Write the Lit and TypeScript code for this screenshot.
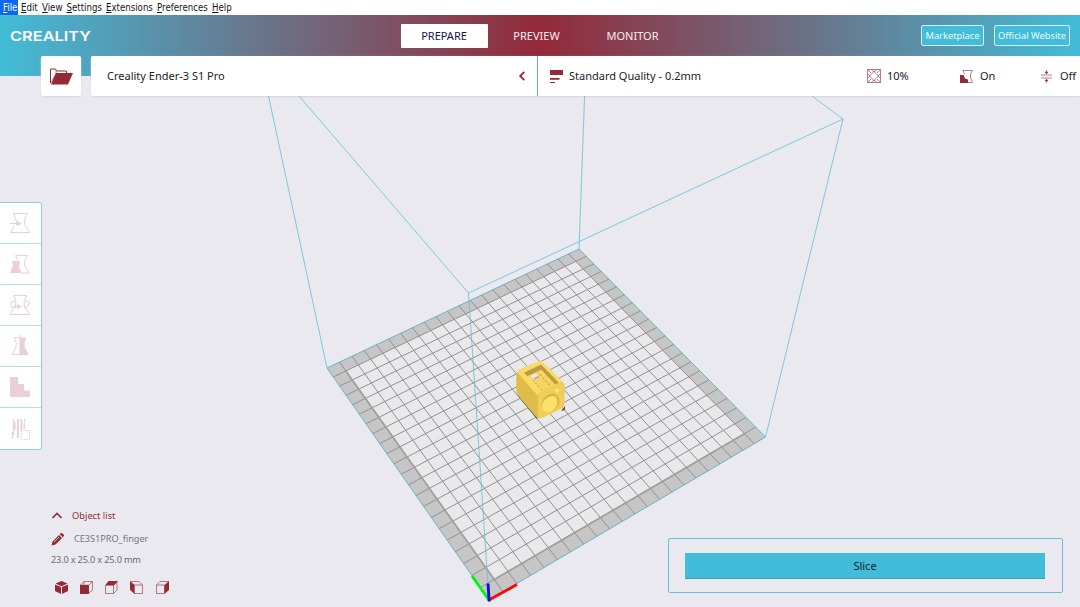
import { LitElement, html, svg, css } from "lit";
import { customElement, property, state } from "lit/decorators.js";
import { classMap } from "lit/directives/class-map.js";

type Pt = [number, number];

/* Maps the unit square of the build plate onto its four projected corners. */
function homography(p00: Pt, p10: Pt, p11: Pt, p01: Pt) {
  const dx1 = p10[0] - p11[0], dx2 = p01[0] - p11[0];
  const dy1 = p10[1] - p11[1], dy2 = p01[1] - p11[1];
  const sx = p00[0] - p10[0] + p11[0] - p01[0];
  const sy = p00[1] - p10[1] + p11[1] - p01[1];
  const d = dx1 * dy2 - dx2 * dy1;
  const g = (sx * dy2 - dx2 * sy) / d;
  const h = (dx1 * sy - sx * dy1) / d;
  const a = p10[0] - p00[0] + g * p10[0], b = p01[0] - p00[0] + h * p01[0];
  const c = p10[1] - p00[1] + g * p10[1], e = p01[1] - p00[1] + h * p01[1];
  return (u: number, v: number): Pt => {
    const w = g * u + h * v + 1;
    return [(a * u + b * v + p00[0]) / w, (c * u + e * v + p00[1]) / w];
  };
}

const plate = homography([489, 600], [765.5, 437], [579, 249], [327, 368]);
const CELLS = 22;
const seg = (a: Pt, b: Pt) => `M${a[0].toFixed(2)} ${a[1].toFixed(2)}L${b[0].toFixed(2)} ${b[1].toFixed(2)}`;
const quad = (m: number) =>
  [plate(m, m), plate(1 - m, m), plate(1 - m, 1 - m), plate(m, 1 - m)].map((p) => p.map((n) => n.toFixed(2)).join(",")).join(" ");
const gridPath = Array.from({ length: CELLS - 1 }, (_, i) => {
  const t = (i + 1) / CELLS;
  return seg(plate(t, 0), plate(t, 1)) + seg(plate(0, t), plate(1, t));
}).join("");

const toolIcons = [
  svg`<path d="M3.5.5h14l-3 6v5l5 8H.8l3-6M3.5.5l3 7.500v4M0 10.500h7" class="l"/><path d="M7 8l5 2.500L7 13z" class="f"/>`,
  svg`<path d="M5.500 1.500h12l-3 6v4l5 7.500H11M5.500 1.500L7.500 6" class="l"/><path d="M2 7h8L9 12l2.500 7H0l3-7z" class="f"/>`,
  svg`<path d="M3.500.500h13l-2 5M4 .500l2 5M3 14l-2.500 5.500h19L15.500 13M5 5.500L1 7v5l4 1.500L6 8zM15.500 5.500L20 7.500l-2 4-3.500 1.500L14 8zM3 11.500h4" class="l"/><path d="M7 9l5 2.500L7 14z" class="f"/>`,
  svg`<path d="M9 1.500H4l2.500 6-1 5L2 18.500h7M10 -1v21" class="l"/><path d="M10 1.500h6.500L14.500 7l.5 5 4 7h-9z" class="f"/>`,
  svg`<path d="M0 0h8v7h6v6.500h6V20H0z" class="f"/>`,
  svg`<path d="M3 0h1v3h1.500v8H4v5H3v3H1v-1h1v-5h1zM7 0h1.800v19H7zM10.500 0h1.800v12h-1.800zM14 0h1v3h-1zM13.500 4H15v6h-1.500z" class="f"/><path d="M11.500 11.500h8v9h-8z" class="l" stroke-dasharray="2 1"/>`,
];

const viewIcons = [
  svg`<path d="M6.500 0l6 2.500-6 2.700-6-2.700zM0 3.500l6 2.600V13L0 10zM13 3.500L7 6.100V13l6-3z" class="f"/>`,
  svg`<path d="M4 .500h8.500v8.500L9 12M4 .500L.500 4M12.500.500L9 4M4 .500V4" class="t"/><path d="M0 3.800h9V13H0z" class="f"/>`,
  svg`<path d="M.500 4v8.500h8L12 9V1M8.500 4v8.500" class="t"/><path d="M3.500 0H13L9 4.500H0z" class="f"/>`,
  svg`<path d="M4 4h8.500v8.500H4zM1 .500h8L12.500 4" class="t"/><path d="M0 0l4.500 4v9L0 8.800z" class="f"/>`,
  svg`<path d="M.500 4h8v8.500h-8zM.500 4L4 .500h9" class="t"/><path d="M13 0v9l-4.500 4V4z" class="f"/>`,
];

@customElement("plate-scene")
class PlateScene extends LitElement {
  static styles = css`
    :host { display: block; height: 100%; }
    svg { display: block; width: 1080px; height: 511px; }
    .volume { fill: none; stroke: #5cc0d5; stroke-width: 0.8; }
    .grid { fill: none; stroke: #919192; stroke-width: 1; }
    .rim { fill: #c6c6c7; stroke: #4fabc0; stroke-width: 0.8; }
    .bed { fill: #e9e9eb; }
    .inner { fill: none; stroke: #a0a0a1; stroke-width: 1.8; }
    .axis { fill: none; stroke-width: 2.9; }
  `;
  render() {
    const bedLeft = seg(plate(1 / CELLS, 1 / CELLS), plate(1 / CELLS, 1 - 1 / CELLS));
    const bedFront = seg(plate(1 / CELLS, 1 / CELLS), plate(1 - 1 / CELLS, 1 / CELLS));
    return html`<svg viewBox="0 96 1080 511">
      <polygon class="rim" points=${quad(0)} />
      <polygon class="bed" points=${quad(1 / CELLS)} />
      <path class="grid" d=${gridPath} />
      <path class="inner" d=${bedLeft + bedFront} />
      <path class="volume" d="M268.500 96L327 368M299 96L468.500 293L843 119L812 96M584.600 96L579 249M843 119L765.500 437M468.500 293L489 600" />
      <g>
        <path d="M517 391l1 5 19 23 2-3zM561 411l4-1v-4z" fill="#55524a" />
        <path d="M516.500 375q0-4 3-5.500l19.500-8q2.500-.800 4 1l19 18.500q2.500 2 2.500 5v17q0 4-3 5.500l-20 9.500q-3 1-5-1l-17.500-20.500q-2.500-2.500-2.500-6z" fill="#edcb56" />
        <path d="M516.500 375q.500-2.500 3-3l17.500 20q1 2 1 5v21.500l-1.500-1.500-17.500-20.500q-2.500-2.500-2.500-6z" fill="#dfbc4b" />
        <path d="M517.500 372.500q1-2 3-3l18.500-8q2.500-.800 4 1l19.500 19-19 9q-5 2-6 5z" fill="#fadb65" />
        <path d="M524 372.700l17-8.200 18 18.500-14 6.500z" fill="#f5d462" />
        <path d="M524 372.700l17-8.200 1.500 4.500-15 7.200z" fill="#b99c43" />
        <path d="M541 364.500l18 18.500-3.500 1.800-14.500-15.500z" fill="#bc9c3e" />
        <path d="M530.500 376l5.500-2.800 3.200 4-5 2.500z" fill="#e9e7ea" />
        <path d="M534 378.200l4.200-2.200 1 1.200-4.500 2.300z" fill="#9d9ca6" />
        <path d="M532.500 380l10.500 11M540 374.500l9.500 10.500" stroke="#b36d43" stroke-width=".8" stroke-dasharray="2 2" fill="none" />
        <path d="M538.500 396q0-3.500 4-5.500l16-7.500q5-1.500 5.500 3v17q0 4-3 5.500l-18 9q-4 1.500-4.500-3z" fill="#f0cf59" />
        <ellipse cx="550.600" cy="402.500" rx="9.600" ry="8" transform="rotate(-48 550.600 402.500)" fill="#d6b348" />
        <ellipse cx="549.800" cy="404" rx="9" ry="6.600" transform="rotate(-48 549.800 404)" fill="#fde06a" />
        <circle cx="557" cy="390.500" r="2" fill="#ffe979" />
      </g>
      <path class="axis" stroke="#00f318" d="M489 600L472 576" />
      <path class="axis" stroke="#f20d0d" d="M489 600L517 584.500" />
      <path class="axis" stroke="#0d0ddf" d="M489.200 601.500L488 583.500" />
    </svg>`;
  }
}

@customElement("app-root")
class AppRoot extends LitElement {
  @state() private stage = "PREPARE";
  @property({ type: String }) printer = "Creality Ender-3 S1 Pro";

  static styles = css`
    :host {
      display: flex; flex-direction: column; width: 1080px; height: 607px; overflow: hidden;
      background: #eae9f0; color: #202126; font: 11px/1 "Noto Sans", sans-serif;
    }
    * { box-sizing: border-box; }
    svg { display: block; overflow: visible; }
    .l, .t { fill: none; stroke: currentColor; stroke-width: 1; }
    .t { stroke-width: 0.75; opacity: 0.8; }
    .f { fill: currentColor; }
    .menu { display: flex; flex: none; height: 15px; background: #fff; color: #15161a; font: 9.6px/15px "DejaVu Sans Condensed", "DejaVu Sans", sans-serif; font-stretch: condensed; white-space: nowrap; }
    .menu span { padding: 0 0 0 3px; }
    .menu span.on { background: #0b66f2; color: #fff; }
    .menu u { text-underline-offset: 1px; text-decoration-thickness: 1px; }
    .head { flex: none; background: linear-gradient(90deg, #42bcd8, #942938 50%, #42bcd8) 0 0 / 100% 61px no-repeat; }
    .nav { display: grid; grid-template-columns: 401px 1fr auto; align-items: center; height: 41px; }
    .logo { padding-left: 10px; }
    .logo text { font: 600 13px "Inter", sans-serif; fill: #fff; }
    .stages { display: flex; gap: 9px; color: #f7edf0; }
    .stage { display: grid; place-items: center; width: 87px; height: 24px; border-radius: 1px; padding-bottom: 1px; }
    .stage:first-child { margin-right: -4px; padding-right: 1px; }
    .stage.on { background: #fff; color: #16164f; }
    .links { display: flex; gap: 10px; padding-right: 10px; color: #eefaff; font-size: 9.3px; }
    .link { display: grid; place-items: center; height: 21px; border: 1px solid #d5f2f8; border-radius: 2px; background: #42bcd8; }
    .mk { width: 63px; }
    .ow { width: 76px; }
    .bar { display: flex; height: 40px; padding-left: 41px; gap: 10px; }
    .open { display: grid; place-items: center; width: 40px; background: #fff; border-radius: 2px; color: #942938; box-shadow: 0 1px 2px #d6d6dc; }
    .settings { display: flex; flex: 1; background: #fff; border-radius: 2px 0 0 2px; box-shadow: 0 1px 2px #d6d6dc; }
    .printer { display: flex; justify-content: space-between; align-items: center; width: 446px; padding: 0 12px 0 16px; }
    .printer svg, .setup svg { color: #942938; }
    .setup { display: grid; grid-template-columns: 317px 93px 81px auto; align-items: center; border-left: 1px solid #55b4c6; padding-left: 12px; }
    .printer span, .item span { padding-bottom: 1px; }
    .item { display: flex; align-items: center; gap: 6px; white-space: nowrap; }
    .item.wide { gap: 7px; }
    .stagearea { position: relative; flex: 1; min-height: 0; }
    .tools { position: absolute; left: 0; top: 106px; width: 42px; background: #fff; border: 1px solid #8fd0de; border-left: 0; border-radius: 0 3px 3px 0; color: #e9cfd6; }
    .tool { display: flex; align-items: center; height: 41px; padding-left: 10px; border-bottom: 1px solid #b4dfe9; }
    .tool:last-child { border-bottom: 0; }
    .objects { position: absolute; left: 51px; top: 411px; display: flex; flex-direction: column; color: #942938; font-size: 9.3px; }
    .row { display: flex; align-items: center; height: 17px; }
    .row.name { height: 30px; }
    .row svg { width: 13px; }
    .title { padding-left: 8px; }
    .file { padding-left: 10px; color: #77757c; font-size: 9.15px; }
    .size { color: #6b6970; padding-top: 1px; height: 12px; font-size: 9.2px; letter-spacing: -0.18px; }
    .views { display: flex; gap: 12.300px; padding: 15px 0 0 3.500px; }
    .action { position: absolute; left: 668px; top: 442px; width: 395px; height: 55px; padding: 14px 17px 13px 16px; border: 1px solid #69bfd4; border-radius: 2px; background: #eae9f0; }
    .slice { display: grid; place-items: center; height: 26px; background: #42bcd8; border-bottom: 1px solid #3fa3b5; color: #10222c; padding-bottom: 1px; }
  `;

  private menu: [string, number][] = [["File", 18], ["Edit", 21], ["View", 24.5], ["Settings", 39.5], ["Extensions", 51], ["Preferences", 55], ["Help", 24]];

  render() {
    return html`
      <div class="menu">
        ${this.menu.map(([m, w], i) => html`<span class=${classMap({ on: i === 0 })} style="width:${w}px"><u>${m[0]}</u>${m.slice(1)}</span>`)}
      </div>
      <div class="head">
        <div class="nav">
          <div class="logo"><svg width="82" height="12"><text x="0" y="10.500" textLength="81" lengthAdjust="spacingAndGlyphs">CREALITY</text></svg></div>
          <div class="stages">
            ${["PREPARE", "PREVIEW", "MONITOR"].map((s) => html`<div class=${classMap({ stage: true, on: s === this.stage })} @click=${() => (this.stage = s)}>${s}</div>`)}
          </div>
          <div class="links"><div class="link mk">Marketplace</div><div class="link ow">Official Website</div></div>
        </div>
        <div class="bar">
          <div class="open"><svg width="23" height="17" viewBox="0 0 23 17"><path d="M.500 15V1h5l1 2h10v2.500" class="l"/><path d="M1 14.500L6 5.500M6 3v2.500" class="t"/><path d="M6 5h17l-5 11.500H1z" class="f"/></svg></div>
          <div class="settings">
            <div class="printer"><span>${this.printer}</span><svg width="6" height="10"><path d="M5.300.800L1.200 5l4.100 4.200" fill="none" stroke="currentColor" stroke-width="1.800"/></svg></div>
            <div class="setup">
              <div class="item"><svg width="13" height="13"><path d="M0 0h13v5H0zM0 8h9.500v1.800H0zM0 12h5v1H0z" class="f"/></svg><span>Standard Quality - 0.2mm</span></div>
              <div class="item"><svg width="14" height="14"><path d="M.500.500h13v13H.500zM4.500.500L7 3 9.500.500M4.500 13.500L7 11l2.500 2.500M.500 4.500L3 7 .500 9.500M13.500 4.500L11 7l2.500 2.500M.500.500L4 4M13.500.500L10 4M.500 13.500L4 10M13.500 13.500L10 10M7 2.500L11.500 7 7 11.500 2.500 7z" class="t"/></svg><span>10%</span></div>
              <div class="item wide"><svg width="13" height="13"><path d="M3 .500h9.500L10.500 4v3.500L12.500 12.500H8M3 .500L4.500 4" class="t"/><path d="M0 5h3.500L5 8.500l3 1V13H0z" class="f"/></svg><span>On</span></div>
              <div class="item wide"><svg width="12" height="13"><path d="M0 5h11M0 8h11M5.500 0v3M5.500 10v3" class="t"/><path d="M3.500 1.800h4L5.500 4.200zM3.500 11.200h4L5.500 8.800z" class="f"/></svg><span>Off</span></div>
            </div>
          </div>
        </div>
      </div>
      <div class="stagearea">
        <plate-scene></plate-scene>
        <div class="tools">${toolIcons.map((i) => html`<div class="tool"><svg width="20" height="20">${i}</svg></div>`)}</div>
        <div class="objects">
          <div class="row"><svg width="13" height="8"><path d="M1.500 6L6 1.500 10.500 6" fill="none" stroke="currentColor" stroke-width="1.600"/></svg><span class="title">Object list</span></div>
          <div class="row name"><svg width="13" height="13"><path d="M.500 12.500l1-4L8 2l3 3-6.500 6.500zM8.700 1.300L10 0h1l2 2v1l-1.300 1.300z" class="f"/><path d="M3 9l5-5" stroke="#eae9f0" stroke-width=".7"/></svg><span class="file">CE3S1PRO_finger</span></div>
          <div class="size">23.0 x 25.0 x 25.0 mm</div>
          <div class="views">${viewIcons.map((i) => html`<svg width="13" height="13">${i}</svg>`)}</div>
        </div>
        <div class="action"><div class="slice">Slice</div></div>
      </div>`;
  }
}
